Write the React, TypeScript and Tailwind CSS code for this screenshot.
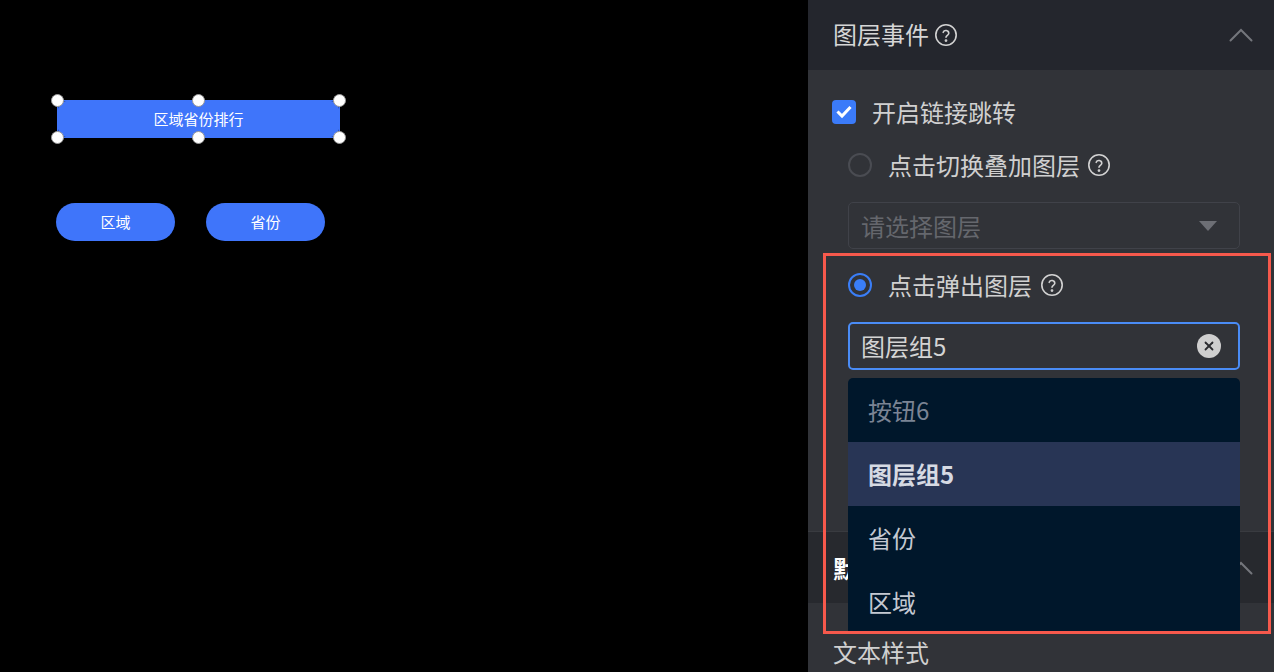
const cjk = { fontFamily: '"Noto Sans CJK SC", "Noto Sans", sans-serif' };

function HelpIcon() {
  return (
    <svg width="24" height="24" viewBox="0 0 24 24" fill="none" stroke="#d2d2d2" strokeWidth="1.6" strokeLinecap="round" strokeLinejoin="round">
      <circle cx="12" cy="12" r="10.2" />
      <path d="M9.2 9.3a2.9 2.9 0 0 1 5.6 0.9c0 1.9-2.8 2.3-2.8 4.1" />
      <circle cx="12" cy="17.6" r="0.6" fill="#d2d2d2" />
    </svg>
  );
}

function ChevronUp() {
  return (
    <svg width="24" height="14" viewBox="0 0 24 14" fill="none" stroke="#74767c" strokeWidth="2" strokeLinecap="round">
      <polyline points="1.5,12.5 12,2 22.5,12.5" />
    </svg>
  );
}

function Handle({ className }: { className: string }) {
  return <span className={`absolute size-[13px] rounded-full border border-[#9a9a9a] bg-white ${className}`} />;
}

function Canvas() {
  return (
    <div className="h-full w-[808px] shrink-0 bg-black pl-[57px] pt-[100px]" style={cjk}>
      {/* selected element */}
      <div className="relative h-[38px] w-[283px] border border-[#3f75fa]">
        <div className="flex h-full items-center justify-center rounded-[8px] bg-[#3f75fa] text-[15px] text-white">
          区域省份排行
        </div>
        <Handle className="-left-[7px] -top-[7px]" />
        <Handle className="left-[134px] -top-[7px]" />
        <Handle className="-right-[7px] -top-[7px]" />
        <Handle className="-left-[7px] -bottom-[7px]" />
        <Handle className="left-[134px] -bottom-[7px]" />
        <Handle className="-right-[7px] -bottom-[7px]" />
      </div>

      <div className="-ml-px mt-[65px] flex gap-[31px]">
        <div className="flex h-[38px] w-[119px] items-center justify-center rounded-full bg-[#3f75fa] text-[15px] text-white">
          区域
        </div>
        <div className="flex h-[38px] w-[119px] items-center justify-center rounded-full bg-[#3f75fa] text-[15px] text-white">
          省份
        </div>
      </div>
    </div>
  );
}

function Panel() {
  return (
    <div className="relative h-full flex-1 overflow-hidden bg-[#313338] text-[24px] leading-8 text-[#d0d0d0]" style={cjk}>
      {/* header */}
      <div className="flex h-[70px] items-center justify-between bg-[#24262d] pl-[25px] pr-[21px]">
        <div className="flex items-center gap-[5px]">
          <span className="-mt-[3px] text-[#d6d6d6]">图层事件</span>
          <HelpIcon />
        </div>
        <ChevronUp />
      </div>

      {/* body */}
      <div className="pb-[161px]">
        <div className="flex h-6 items-center pl-[24px] mt-[30px]">
          <span className="flex size-6 items-center justify-center rounded-[4px] bg-[#3b7bf9]">
            <svg width="16" height="16" viewBox="0 0 16 16" fill="none" stroke="white" strokeWidth="3" strokeLinecap="square">
              <polyline points="2.5,8.5 6,12 13.5,4" />
            </svg>
          </span>
          <span className="ml-4">开启链接跳转</span>
        </div>

        <div className="mt-[29px] flex h-6 items-center pl-[40px]">
          <span className="size-6 rounded-full border-2 border-[#4a4c52]" />
          <span className="ml-4">点击切换叠加图层</span>
          <span className="ml-[7px]"><HelpIcon /></span>
        </div>

        <div className="ml-[40px] mt-[25px] flex h-[47px] w-[392px] items-center justify-between rounded-[5px] border border-[#404249] pl-[12px] pr-[22px]">
          <span className="text-[#65676d]">请选择图层</span>
          <svg width="18" height="10" viewBox="0 0 18 10">
            <polygon points="0,0 18,0 9,10" fill="#6d6f75" />
          </svg>
        </div>

        <div className="mt-[24px] flex h-6 items-center pl-[40px]">
          <span className="flex size-6 items-center justify-center rounded-full border-2 border-[#3a7ef7]">
            <span className="size-3 rounded-full bg-[#3a7ef7]" />
          </span>
          <span className="ml-4">点击弹出图层</span>
          <span className="ml-[8px]"><HelpIcon /></span>
        </div>

        <div className="ml-[40px] mt-[25px] flex h-[48px] w-[392px] items-center justify-between rounded-[5px] border-2 border-[#4a8cf6] pl-[11px] pr-[17px]">
          <span className="text-[#d4d4d4]">图层组5</span>
          <span className="flex size-6 items-center justify-center rounded-full bg-[#cfcfcf]">
            <svg width="10" height="10" viewBox="0 0 10 10" stroke="#2a2b2f" strokeWidth="1.8" strokeLinecap="round">
              <line x1="1.5" y1="1.5" x2="8.5" y2="8.5" />
              <line x1="8.5" y1="1.5" x2="1.5" y2="8.5" />
            </svg>
          </span>
        </div>
      </div>

      {/* second section header */}
      <div className="flex h-[72px] items-center justify-between border-t border-[#393b40] bg-[#27292e] pl-[25px] pr-[21px]">
        <span className="font-bold text-white">默认样式</span>
        <ChevronUp />
      </div>

      <div className="pl-[25px] pt-[33px] text-[#d0d0d0]">文本样式</div>

      {/* dropdown menu */}
      <div className="absolute left-[40px] top-[378px] w-[392px] overflow-hidden rounded-t-[5px] bg-[#00172b]">
        <div className="flex h-[64px] items-center pl-[20px] text-[#7b8494]">按钮6</div>
        <div className="flex h-[64px] items-center bg-[#283555] pl-[20px] font-bold text-[#d6dae3]">图层组5</div>
        <div className="flex h-[64px] items-center pl-[20px] text-[#c4c9d2]">省份</div>
        <div className="flex h-[64px] items-center pl-[20px] text-[#c4c9d2]">区域</div>
      </div>

      {/* highlight frame */}
      <div className="pointer-events-none absolute left-[15px] top-[253px] h-[381px] w-[448px] border-[3px] border-[#f6594c]" />
    </div>
  );
}

export default function App() {
  return (
    <div className="flex h-[672px] w-[1274px] overflow-hidden bg-black">
      <Canvas />
      <Panel />
    </div>
  );
}
